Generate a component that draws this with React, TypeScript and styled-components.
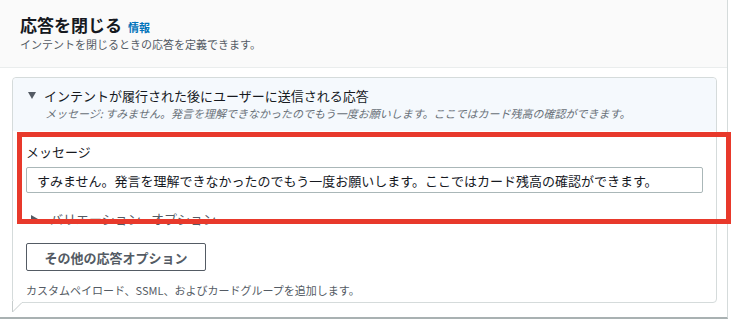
import React, {FC} from 'react';
import styled, {createGlobalStyle} from "styled-components";

const GlobalStyle = createGlobalStyle`
  html, body {
    margin: 0;
    padding: 0;
    background: #ffffff;
    font-family: "Noto Sans CJK JP", "Noto Sans", sans-serif;
    color: #16191f;
  }
`

const Page = styled.div`
  position: relative;
  width: 727px;
  height: 317px;
  border-right: 1px solid #d5dbdb;
  border-bottom: 2px solid #a9b1b2;
  box-sizing: content-box;
`

const Header = styled.div`
  background: #fafafa;
  border-bottom: 1px solid #eaeded;
  padding: 14px 20px 15px;
`

const TitleRow = styled.div`
  display: flex;
  align-items: baseline;
  gap: 6px;
`

const Title = styled.h2`
  margin: 0;
  font-size: 17px;
  line-height: 22px;
  font-weight: 700;
  color: #16191f;
`

const InfoLink = styled.a`
  font-size: 11px;
  font-weight: 700;
  color: #0073bb;
  text-decoration: none;
`

const Description = styled.p`
  margin: 0;
  font-size: 11px;
  line-height: 16px;
  color: #545b64;
`

const Body = styled.div`
  padding: 9px 10px 0 12px;
`

const Bubble = styled.div`
  position: relative;
  border: 1px solid #d5dbdb;
  border-radius: 4px;
  background: #ffffff;
`

const BubbleTail = styled.svg`
  position: absolute;
  left: -1px;
  bottom: -11px;
  width: 12px;
  height: 12px;
`

const SummarySection = styled.div`
  background: #f5f9fd;
  border-radius: 4px 4px 0 0;
  padding: 9px 14px 10px 15px;
`

const SummaryHeading = styled.div`
  display: flex;
  align-items: center;
  gap: 8px;
  font-size: 13px;
  line-height: 17px;
  color: #16191f;
`

const Caret = styled.span<{ dir: 'down' | 'right', color: string }>`
  display: inline-block;
  width: 0;
  height: 0;
  ${p => p.dir === 'down'
    ? `border-left: 4.5px solid transparent; border-right: 4.5px solid transparent; border-top: 7px solid ${p.color};`
    : `border-top: 4.5px solid transparent; border-bottom: 4.5px solid transparent; border-left: 7px solid ${p.color};`}
`

const SummaryText = styled.p`
  margin: 2px 0 0 17px;
  font-size: 11px;
  line-height: 15px;
  font-style: italic;
  color: #687078;
`

const EditSection = styled.div`
  padding: 12px 13px 4px 13px;
`

const FieldLabel = styled.label`
  display: block;
  font-size: 13px;
  line-height: 18px;
  color: #16191f;
`

const TextInput = styled.input`
  display: block;
  box-sizing: border-box;
  width: 100%;
  height: 26px;
  margin-top: 6px;
  padding: 0 10px;
  border: 1px solid #aab7b8;
  border-radius: 2px;
  font-family: "Noto Sans CJK JP", sans-serif;
  font-size: 13px;
  color: #16191f;
  background: #ffffff;
`

const VariationRow = styled.div`
  display: flex;
  align-items: center;
  gap: 12px;
  margin-top: 17px;
  padding-left: 5px;
  font-size: 13px;
  line-height: 18px;
  color: #545b64;
`

const OptionsButton = styled.button`
  display: block;
  box-sizing: border-box;
  width: 180px;
  height: 28px;
  margin-top: 15px;
  border: 1px solid #545b64;
  border-radius: 2px;
  background: #ffffff;
  font-family: "Noto Sans CJK JP", sans-serif;
  font-size: 13px;
  font-weight: 700;
  color: #545b64;
`

const HelperText = styled.p`
  margin: 11px 0 0;
  font-size: 11px;
  line-height: 16px;
  color: #545b64;
`

const Highlight = styled.div`
  position: absolute;
  left: 17px;
  top: 132px;
  width: 714px;
  height: 92px;
  box-sizing: border-box;
  border: 5px solid #e8392b;
  pointer-events: none;
`

const message = 'すみません。発言を理解できなかったのでもう一度お願いします。ここではカード残高の確認ができます。'

const App: FC = () => {
    return (
        <>
            <GlobalStyle/>
            <Page>
                <Header>
                    <TitleRow>
                        <Title>応答を閉じる</Title>
                        <InfoLink>情報</InfoLink>
                    </TitleRow>
                    <Description>インテントを閉じるときの応答を定義できます。</Description>
                </Header>
                <Body>
                    <Bubble>
                        <SummarySection>
                            <SummaryHeading>
                                <Caret dir="down" color="#545b64"/>
                                インテントが履行された後にユーザーに送信される応答
                            </SummaryHeading>
                            <SummaryText>メッセージ: {message}</SummaryText>
                        </SummarySection>
                        <EditSection>
                            <FieldLabel>メッセージ</FieldLabel>
                            <TextInput defaultValue={message} readOnly/>
                            <VariationRow>
                                <Caret dir="right" color="#545b64"/>
                                バリエーション - オプション
                            </VariationRow>
                            <OptionsButton>その他の応答オプション</OptionsButton>
                            <HelperText>カスタムペイロード、SSML、およびカードグループを追加します。</HelperText>
                        </EditSection>
                        <BubbleTail viewBox="0 0 12 12">
                            <path d="M0.5 0 L0.5 11 L10 1.5 L10 0 Z" fill="#ffffff"/>
                            <path d="M0.5 0 L0.5 11 L10 1.5" fill="none" stroke="#c6cccc" strokeWidth="1"/>
                        </BubbleTail>
                    </Bubble>
                </Body>
                <Highlight/>
            </Page>
        </>
    );
};

export default App
